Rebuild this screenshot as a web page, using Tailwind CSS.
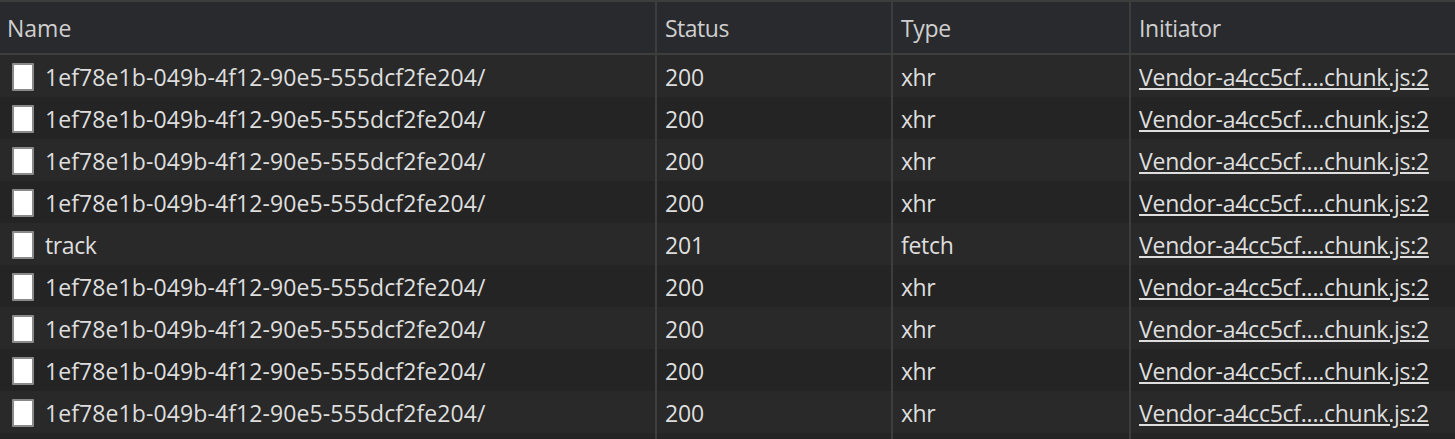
<!DOCTYPE html>
<html><head><script src="https://cdn.jsdelivr.net/npm/@tailwindcss/browser@4"></script></head>
<body class="bg-[#292929] overflow-hidden">
<div class="w-[1455px] h-[439px] overflow-hidden font-['Open_Sans','Noto_Sans',sans-serif] text-[23px] text-[#dedede] leading-[30px]">
<div class="grid grid-cols-[657px_236px_238px_1fr] h-[55px] bg-[#292a2d] border-t-2 border-b-2 border-[#3d3d3d] text-[#cfcfcf]">
<div class="pl-[7px] flex items-center border-r-2 border-[#3d3d3d]">Name</div>
<div class="pl-2 flex items-center border-r-2 border-[#3d3d3d] tracking-[-0.5px]">Status</div>
<div class="pl-2 flex items-center border-r-2 border-[#3d3d3d] tracking-[-0.3px]">Type</div>
<div class="pl-2 flex items-center tracking-[-0.3px]">Initiator</div>
</div>
<div class="grid grid-cols-[657px_236px_238px_1fr] h-[42px] bg-[#292929]"><div class="flex items-center pt-[2px] pl-[12px] gap-[11px] border-r-2 border-[#3d3d3d] tracking-[0.1px]"><span class="w-[22px] h-[28px] bg-white border-2 border-[#8a8a8a] rounded-[1px]"></span>1ef78e1b-049b-4f12-90e5-555dcf2fe204/</div><div class="flex items-center pt-[2px] pl-2 border-r-2 border-[#3d3d3d] tracking-[-0.2px]">200</div><div class="flex items-center pt-[2px] pl-2 border-r-2 border-[#3d3d3d] tracking-[-0.5px]">xhr</div><div class="flex items-center pt-[2px] pl-2 underline tracking-[-0.25px]">Vendor-a4cc5cf....chunk.js:2</div></div>
<div class="grid grid-cols-[657px_236px_238px_1fr] h-[42px] bg-[#242424]"><div class="flex items-center pt-[2px] pl-[12px] gap-[11px] border-r-2 border-[#3d3d3d] tracking-[0.1px]"><span class="w-[22px] h-[28px] bg-white border-2 border-[#8a8a8a] rounded-[1px]"></span>1ef78e1b-049b-4f12-90e5-555dcf2fe204/</div><div class="flex items-center pt-[2px] pl-2 border-r-2 border-[#3d3d3d] tracking-[-0.2px]">200</div><div class="flex items-center pt-[2px] pl-2 border-r-2 border-[#3d3d3d] tracking-[-0.5px]">xhr</div><div class="flex items-center pt-[2px] pl-2 underline tracking-[-0.25px]">Vendor-a4cc5cf....chunk.js:2</div></div>
<div class="grid grid-cols-[657px_236px_238px_1fr] h-[42px] bg-[#292929]"><div class="flex items-center pt-[2px] pl-[12px] gap-[11px] border-r-2 border-[#3d3d3d] tracking-[0.1px]"><span class="w-[22px] h-[28px] bg-white border-2 border-[#8a8a8a] rounded-[1px]"></span>1ef78e1b-049b-4f12-90e5-555dcf2fe204/</div><div class="flex items-center pt-[2px] pl-2 border-r-2 border-[#3d3d3d] tracking-[-0.2px]">200</div><div class="flex items-center pt-[2px] pl-2 border-r-2 border-[#3d3d3d] tracking-[-0.5px]">xhr</div><div class="flex items-center pt-[2px] pl-2 underline tracking-[-0.25px]">Vendor-a4cc5cf....chunk.js:2</div></div>
<div class="grid grid-cols-[657px_236px_238px_1fr] h-[42px] bg-[#242424]"><div class="flex items-center pt-[2px] pl-[12px] gap-[11px] border-r-2 border-[#3d3d3d] tracking-[0.1px]"><span class="w-[22px] h-[28px] bg-white border-2 border-[#8a8a8a] rounded-[1px]"></span>1ef78e1b-049b-4f12-90e5-555dcf2fe204/</div><div class="flex items-center pt-[2px] pl-2 border-r-2 border-[#3d3d3d] tracking-[-0.2px]">200</div><div class="flex items-center pt-[2px] pl-2 border-r-2 border-[#3d3d3d] tracking-[-0.5px]">xhr</div><div class="flex items-center pt-[2px] pl-2 underline tracking-[-0.25px]">Vendor-a4cc5cf....chunk.js:2</div></div>
<div class="grid grid-cols-[657px_236px_238px_1fr] h-[42px] bg-[#292929]"><div class="flex items-center pt-[2px] pl-[12px] gap-[11px] border-r-2 border-[#3d3d3d] tracking-[-0.4px]"><span class="w-[22px] h-[28px] bg-white border-2 border-[#8a8a8a] rounded-[1px]"></span>track</div><div class="flex items-center pt-[2px] pl-2 border-r-2 border-[#3d3d3d] tracking-[-0.2px]">201</div><div class="flex items-center pt-[2px] pl-2 border-r-2 border-[#3d3d3d] tracking-[-0.3px]">fetch</div><div class="flex items-center pt-[2px] pl-2 underline tracking-[-0.25px]">Vendor-a4cc5cf....chunk.js:2</div></div>
<div class="grid grid-cols-[657px_236px_238px_1fr] h-[42px] bg-[#242424]"><div class="flex items-center pt-[2px] pl-[12px] gap-[11px] border-r-2 border-[#3d3d3d] tracking-[0.1px]"><span class="w-[22px] h-[28px] bg-white border-2 border-[#8a8a8a] rounded-[1px]"></span>1ef78e1b-049b-4f12-90e5-555dcf2fe204/</div><div class="flex items-center pt-[2px] pl-2 border-r-2 border-[#3d3d3d] tracking-[-0.2px]">200</div><div class="flex items-center pt-[2px] pl-2 border-r-2 border-[#3d3d3d] tracking-[-0.5px]">xhr</div><div class="flex items-center pt-[2px] pl-2 underline tracking-[-0.25px]">Vendor-a4cc5cf....chunk.js:2</div></div>
<div class="grid grid-cols-[657px_236px_238px_1fr] h-[42px] bg-[#292929]"><div class="flex items-center pt-[2px] pl-[12px] gap-[11px] border-r-2 border-[#3d3d3d] tracking-[0.1px]"><span class="w-[22px] h-[28px] bg-white border-2 border-[#8a8a8a] rounded-[1px]"></span>1ef78e1b-049b-4f12-90e5-555dcf2fe204/</div><div class="flex items-center pt-[2px] pl-2 border-r-2 border-[#3d3d3d] tracking-[-0.2px]">200</div><div class="flex items-center pt-[2px] pl-2 border-r-2 border-[#3d3d3d] tracking-[-0.5px]">xhr</div><div class="flex items-center pt-[2px] pl-2 underline tracking-[-0.25px]">Vendor-a4cc5cf....chunk.js:2</div></div>
<div class="grid grid-cols-[657px_236px_238px_1fr] h-[42px] bg-[#242424]"><div class="flex items-center pt-[2px] pl-[12px] gap-[11px] border-r-2 border-[#3d3d3d] tracking-[0.1px]"><span class="w-[22px] h-[28px] bg-white border-2 border-[#8a8a8a] rounded-[1px]"></span>1ef78e1b-049b-4f12-90e5-555dcf2fe204/</div><div class="flex items-center pt-[2px] pl-2 border-r-2 border-[#3d3d3d] tracking-[-0.2px]">200</div><div class="flex items-center pt-[2px] pl-2 border-r-2 border-[#3d3d3d] tracking-[-0.5px]">xhr</div><div class="flex items-center pt-[2px] pl-2 underline tracking-[-0.25px]">Vendor-a4cc5cf....chunk.js:2</div></div>
<div class="grid grid-cols-[657px_236px_238px_1fr] h-[42px] bg-[#292929]"><div class="flex items-center pt-[2px] pl-[12px] gap-[11px] border-r-2 border-[#3d3d3d] tracking-[0.1px]"><span class="w-[22px] h-[28px] bg-white border-2 border-[#8a8a8a] rounded-[1px]"></span>1ef78e1b-049b-4f12-90e5-555dcf2fe204/</div><div class="flex items-center pt-[2px] pl-2 border-r-2 border-[#3d3d3d] tracking-[-0.2px]">200</div><div class="flex items-center pt-[2px] pl-2 border-r-2 border-[#3d3d3d] tracking-[-0.5px]">xhr</div><div class="flex items-center pt-[2px] pl-2 underline tracking-[-0.25px]">Vendor-a4cc5cf....chunk.js:2</div></div>
<div class="grid grid-cols-[657px_236px_238px_1fr] h-[6px] bg-[#242424]"><div class="border-r-2 border-[#3d3d3d]"></div><div class="border-r-2 border-[#3d3d3d]"></div><div class="border-r-2 border-[#3d3d3d]"></div><div></div></div>
</div>
</body></html>
